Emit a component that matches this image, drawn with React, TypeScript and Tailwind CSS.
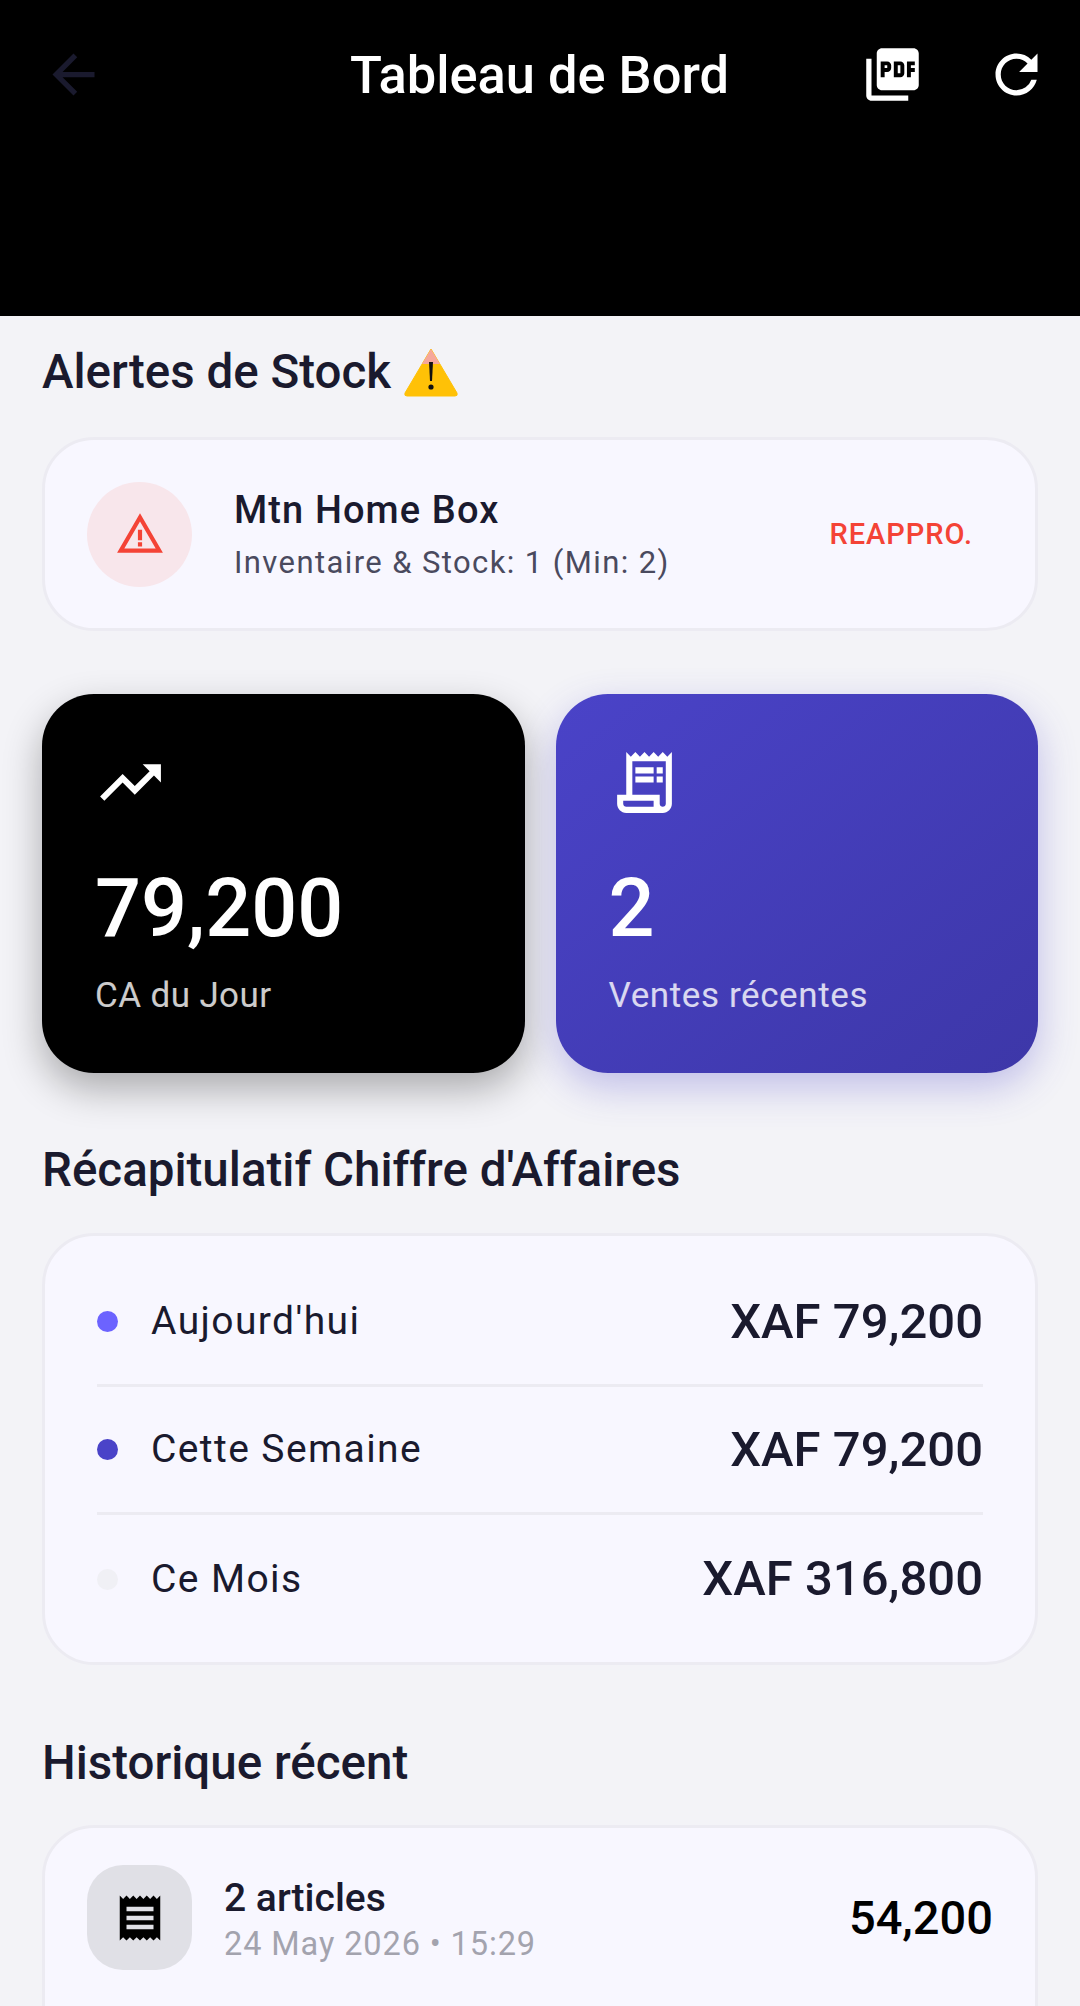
import React from "react";
import {
  MdArrowBack,
  MdOutlineReceiptLong,
  MdPictureAsPdf,
  MdReceipt,
  MdRefresh,
  MdTrendingUp,
  MdWarningAmber,
} from "react-icons/md";

const rows = [
  { label: "Aujourd'hui", value: "XAF 79,200", dot: "bg-[#6c63ff]" },
  { label: "Cette Semaine", value: "XAF 79,200", dot: "bg-[#4a43c8]" },
  { label: "Ce Mois", value: "XAF 316,800", dot: "bg-[#f0f0f5]" },
];

function WarningEmoji() {
  return (
    <svg width="56" height="50" viewBox="0 0 56 50" className="ml-[12px] shrink-0">
      <path d="M28 2 L54 46 Q55 49 52 49 L4 49 Q1 49 2 46 Z" fill="#ffc107" stroke="#ffc107" strokeLinejoin="round" />
      <path d="M28 2 L37 17 L19 17 Z" fill="#f6a79b" />
      <path d="M26 15 h4 l-1 19 h-2 Z" fill="#111" />
      <circle cx="28" cy="40" r="2.6" fill="#111" />
    </svg>
  );
}

export default function App() {
  return (
    <div className="h-[2006px] w-[1080px] overflow-hidden bg-[#f3f3f7] font-['Roboto',sans-serif] text-[#1a1a2e]">
      {/* App bar */}
      <header className="flex h-[316px] items-start bg-black pl-[42px] pr-[32px] pt-[43px]">
        <MdArrowBack size={63} className="text-[#1a1a2e]" />
        <h1 className="ml-[245px] mt-[1px] text-[52.4px] font-medium leading-[63px] text-white">Tableau de Bord</h1>
        <div className="ml-auto flex items-center gap-[61px]">
          <MdPictureAsPdf size={63} className="text-white" />
          <MdRefresh size={63} className="text-white" />
        </div>
      </header>

      <main className="px-[42px]">
        <div className="flex h-[121px] items-center pb-[9px]">
          <h2 className="text-[47.5px] font-medium leading-[60px]">Alertes de Stock</h2>
          <WarningEmoji />
        </div>

        {/* Stock alert */}
        <section className="flex h-[194px] items-center rounded-[52px] border-[3px] border-[#ecebf2] bg-[#f8f7ff] pl-[42px] pr-[62px]">
          <div className="flex h-[105px] w-[105px] shrink-0 items-center justify-center rounded-full bg-[#f8e6eb]">
            <MdWarningAmber size={50} className="text-[#f44336]" />
          </div>
          <div className="ml-[42px] flex-1 pt-[2px]">
            <p className="text-[38px] font-medium leading-[46px] tracking-[1.1px]">Mtn Home Box</p>
            <p className="mt-[10px] text-[31px] leading-[40px] tracking-[1.4px] text-[#4a4a5e]">Inventaire &amp; Stock: 1 (Min: 2)</p>
          </div>
          <span className="pt-[2px] text-[29px] font-medium tracking-[1px] text-[#f44336]">REAPPRO.</span>
        </section>

        {/* KPI cards */}
        <section className="mt-[63px] grid grid-cols-2 gap-[31px]">
          <div className="flex h-[379px] flex-col rounded-[52px] bg-black pl-[53px] pt-[52px] text-white shadow-[0_16px_38px_rgba(0,0,0,0.3)]">
            <MdTrendingUp size={73} className="-ml-[1px]" />
            <p className="mt-[42px] text-[81px] font-medium leading-[96px]">79,200</p>
            <p className="mt-[18px] text-[35px] leading-[42px] tracking-[0.4px] text-white/80">CA du Jour</p>
          </div>
          <div className="flex h-[379px] flex-col rounded-[52px] bg-gradient-to-br from-[#4a43c8] to-[#3d37a8] pl-[53px] pt-[52px] text-white shadow-[0_14px_38px_rgba(74,67,200,0.3)]">
            <MdOutlineReceiptLong size={73} className="-ml-[1px]" />
            <p className="mt-[42px] text-[81px] font-medium leading-[96px]">2</p>
            <p className="mt-[18px] text-[35px] leading-[42px] tracking-[0.6px] text-white/80">Ventes récentes</p>
          </div>
        </section>

        <h2 className="mt-[67px] text-[47.5px] font-medium leading-[60px]">Récapitulatif Chiffre d'Affaires</h2>

        {/* Revenue summary */}
        <section className="mt-[33px] rounded-[52px] border-[3px] border-[#ecebf2] bg-[#f8f7ff] px-[52px] pb-[19px] pt-[23px]">
          {rows.map((row, i) => (
            <div key={row.label} className={`flex h-[128px] items-center ${i < rows.length - 1 ? "border-b-[3px] border-[#ecebf2]" : ""}`}>
              <span className={`h-[21px] w-[21px] rounded-full ${row.dot}`} />
              <span className="ml-[33px] flex-1 text-[39px] tracking-[1.4px]">{row.label}</span>
              <span className="text-[49px] font-medium">{row.value}</span>
            </div>
          ))}
        </section>

        <h2 className="mt-[68px] text-[47.5px] font-medium leading-[60px]">Historique récent</h2>

        {/* Recent sales */}
        <section className="mt-[32px] h-[260px] rounded-[52px] border-[3px] border-[#ecebf2] bg-[#f8f7ff] pl-[42px] pr-[42px] pt-[37px]">
          <div className="flex items-center">
            <div className="flex h-[105px] w-[105px] shrink-0 items-center justify-center rounded-[36px] bg-[#e0e0e6]">
              <MdReceipt size={54} className="text-black" />
            </div>
            <div className="ml-[32px] flex-1 pt-[5px]">
              <p className="text-[39px] font-medium leading-[46px]">2 articles</p>
              <p className="mt-[2px] text-[32.5px] leading-[42px] tracking-[0.9px] text-[#a3a3ae]">24 May 2026 • 15:29</p>
            </div>
            <span className="pt-[2px] text-[47px] font-medium text-black">54,200</span>
          </div>
        </section>
      </main>
    </div>
  );
}
